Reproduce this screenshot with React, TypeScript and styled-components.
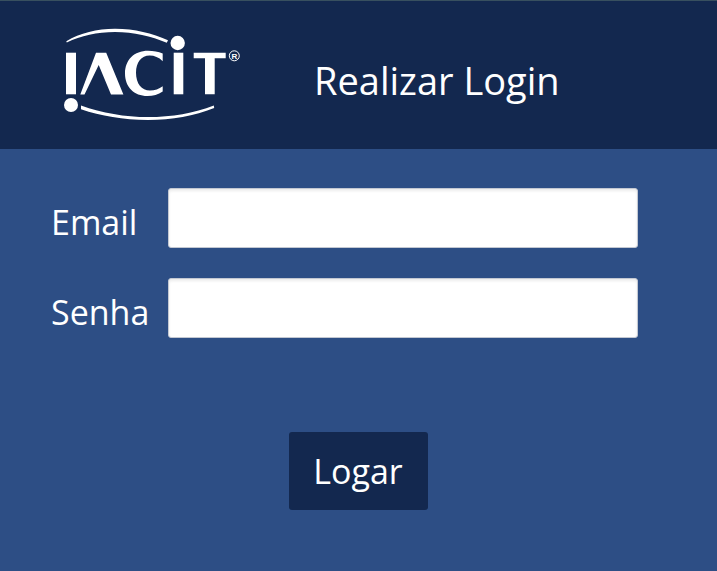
import React from "react";
import styled, { createGlobalStyle } from "styled-components";

const GlobalStyle = createGlobalStyle`
  *, *::before, *::after { box-sizing: border-box; }
  body {
    margin: 0;
    background: #2d4e85;
    color: #fff;
    font-family: "Segoe UI", "Open Sans", "Noto Sans", sans-serif;
  }
`;

const Header = styled.header`
  display: flex;
  align-items: center;
  gap: 72px;
  padding: 25px 62px 27px;
  background: #13284f;
  border-top: 1px solid #38505f;
`;

const Logo = styled.svg`
  flex: none;
  width: 180px;
  height: 96px;
  fill: #fff;
`;

const Title = styled.h1`
  margin: 0;
  padding-top: 12px;
  font-size: 38px;
  font-weight: 400;
  line-height: 52px;
  white-space: nowrap;
`;

const Form = styled.form`
  display: flex;
  flex-direction: column;
  gap: 30px;
  padding: 39px 79px 60px 51px;
`;

const Field = styled.div`
  display: grid;
  grid-template-columns: 117px 1fr;
  align-items: center;
`;

const Label = styled.label`
  padding-top: 8px;
  font-size: 34px;
  line-height: 48px;
`;

const Input = styled.input`
  width: 100%;
  min-width: 0;
  height: 60px;
  padding: 6px 16px;
  border: 1px solid #c3c8d2;
  border-radius: 3px;
  background: #fff;
  box-shadow: inset 0 2px 3px rgba(0, 0, 0, 0.08);
  color: #222;
  font: inherit;
  font-size: 28px;
`;

const Actions = styled.div`
  display: flex;
  justify-content: center;
  margin: 64px -78px 0 -51px;
`;

const Button = styled.button`
  min-width: 139px;
  height: 78px;
  padding: 0 20px;
  border: 0;
  border-radius: 3px;
  background: #13284f;
  color: #fff;
  font: inherit;
  font-size: 34px;
  line-height: 48px;
  cursor: pointer;
`;

function IacitLogo() {
  return (
    <Logo viewBox="62 26 180 96" role="img" aria-label="IACIT">
      <path d="M66.3 41.2C80 33 97 28.7 115 28.7c20 0 37 4.6 53 11.6l-1.2 2.5C151 36 134 31.9 115 31.9c-18 0-34 3.500-48.200 10.600z" />
      <path d="M81 105.500c21 7.500 44 11.600 67 11.600 24 0 46-4 65.800-11.600l.4 2.500c-20 8-42 11.900-66.200 11.900-25 0-47-4-67-10.700z" />
      <path d="M66 52.700h10v41.600H66z" />
      <circle cx="71" cy="105" r="7" />
      <path d="M96 52.700h10.200l17.200 41.900H111L98.700 65 84.500 94.600h-4.200z" />
      <path d="M162.700 53.500v7.700c-4-3.800-8.200-5.600-13-5.600-8.500 0-13.700 7-13.700 17.200 0 10.800 5.600 17.800 14 17.800 4.800 0 9-1.500 12.700-4.300v5.200c-4.500 3-9.500 4.500-15.200 4.500C134 96 125 87 125 73.500c0-13.700 9.200-22.800 23-22.800 5.500 0 10.300 1 14.700 2.800z" />
      <path d="M173.700 52.700h9.600v41.600h-9.600z" />
      <circle cx="177.700" cy="43" r="7.200" />
      <path d="M193.700 52.700h32v5.500h-11v36.100H205V58.200h-11.300z" />
      <circle cx="234.300" cy="55.800" r="5" fill="none" stroke="#fff" strokeWidth="1" />
      <text
        x="234.300"
        y="58.700"
        textAnchor="middle"
        fontFamily="Liberation Sans, sans-serif"
        fontSize="8"
        fontWeight="700"
      >
        R
      </text>
    </Logo>
  );
}

export default function App() {
  return (
    <>
      <GlobalStyle />
      <Header>
        <IacitLogo />
        <Title>Realizar Login</Title>
      </Header>
      <main>
        <Form onSubmit={(event: React.FormEvent) => event.preventDefault()}>
          <Field>
            <Label htmlFor="email">Email</Label>
            <Input id="email" name="email" type="email" />
          </Field>
          <Field>
            <Label htmlFor="senha">Senha</Label>
            <Input id="senha" name="senha" type="password" />
          </Field>
          <Actions>
            <Button type="submit">Logar</Button>
          </Actions>
        </Form>
      </main>
    </>
  );
}
